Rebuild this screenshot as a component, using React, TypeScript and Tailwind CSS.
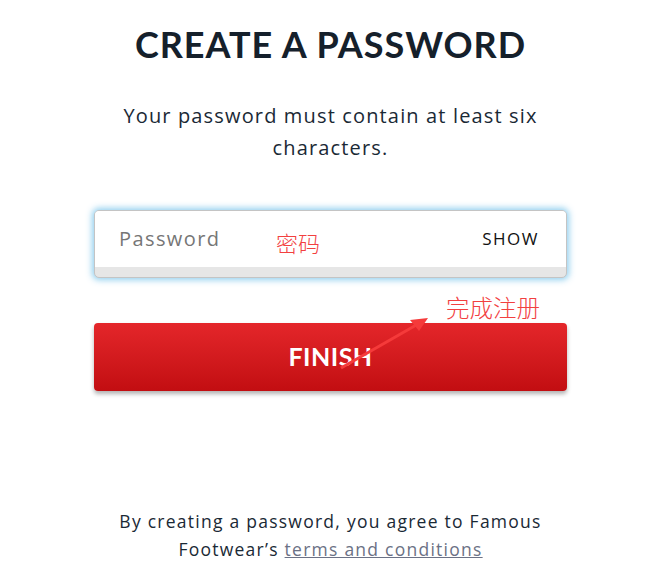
import React from "react";

export default function App() {
  return (
    <div className="relative w-[653px] h-[573px] bg-white overflow-hidden" style={{ fontFamily: '"Open Sans", "Noto Sans", sans-serif' }}>
      <div className="ml-[94px] w-[473px] flex flex-col items-center pt-[22px]">
        <h1 className="text-[36px] leading-[44px] font-bold tracking-[1px] text-[#15202b]" style={{ fontFamily: '"Lato", sans-serif' }}>CREATE A PASSWORD</h1>
        <p className="mt-[34px] text-center text-[20px] leading-[32px] tracking-[1.15px] text-[#1a2935] whitespace-nowrap">
          Your password must contain at least six<br />characters.
        </p>
        <div className="mt-[46px] w-full h-[68px] rounded-[5px] border border-[#c4c4c4] bg-[#e6e6e6] shadow-[0_0_6px_2px_rgba(128,200,236,0.85)] overflow-hidden">
          <div className="h-[56px] bg-white flex items-center justify-between pl-[24px] pr-[27px]">
            <span className="text-[20px] tracking-[1.4px] text-[#767676] mt-[-1px]">Password</span>
            <span className="text-[17px] tracking-[1.5px] text-[#111] font-medium">SHOW</span>
          </div>
        </div>
        <button className="mt-[45px] w-full h-[68px] rounded-[4px] bg-gradient-to-b from-[#e4262a] to-[#c20d11] text-white text-[25px] font-bold tracking-[0.5px] shadow-[0_3px_4px_rgba(0,0,0,0.3)]" style={{ fontFamily: '"Lato", sans-serif' }}>
          FINISH
        </button>
        <p className="mt-[116px] text-center text-[17.5px] leading-[28px] tracking-[1.25px] text-[#1a2935] whitespace-nowrap">
          By creating a password, you agree to Famous<br />
          Footwear’s <span className="underline text-[#6b7185]">terms and conditions</span>
        </p>
      </div>
      <span className="absolute left-[276px] top-[226px] text-[22px] text-[#f2403f]" style={{ fontFamily: '"Noto Sans CJK SC", sans-serif', fontWeight: 300 }}>密码</span>
      <span className="absolute left-[446px] top-[290px] text-[23.5px] text-[#f2403f]" style={{ fontFamily: '"Noto Sans CJK SC", sans-serif', fontWeight: 300 }}>完成注册</span>
      <svg className="absolute left-0 top-0" width="653" height="573" viewBox="0 0 653 573">
        <line x1="341" y1="368" x2="418" y2="324" stroke="#f53a3a" strokeWidth="3" />
        <polygon points="428,318 410,320 419,331" fill="#f53a3a" />
      </svg>
    </div>
  );
}
